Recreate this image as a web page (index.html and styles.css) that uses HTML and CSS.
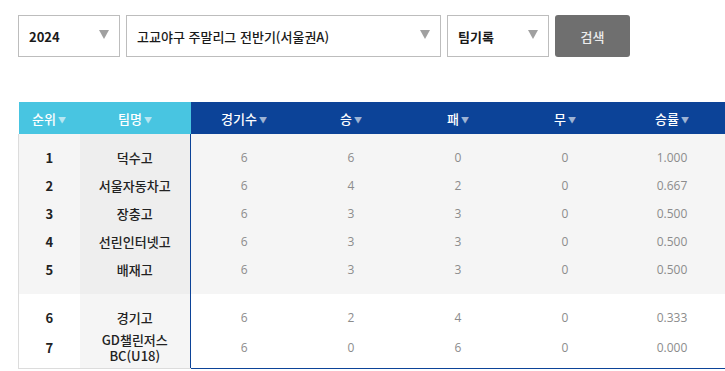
FILE: index.html
```html
<!DOCTYPE html>
<html lang="ko">
<head>
<meta charset="utf-8">
<link rel="stylesheet" href="styles.css">
</head>
<body>
<div class="page">
  <div class="controls">
    <div class="select sel-year"><span class="sel-text bold">2024</span><span class="caret"></span></div>
    <div class="select sel-league"><span class="sel-text">고교야구 주말리그 전반기(서울권A)</span><span class="caret"></span></div>
    <div class="select sel-type"><span class="sel-text bold">팀기록</span><span class="caret"></span></div>
    <button class="btn">검색</button>
  </div>
  <table class="rank-table">
    <colgroup>
      <col class="c-rank"><col class="c-team"><col class="c-stat"><col class="c-stat"><col class="c-stat"><col class="c-stat"><col class="c-stat">
    </colgroup>
    <thead>
      <tr>
        <th class="h-light">순위<span class="arr">▼</span></th>
        <th class="h-light">팀명<span class="arr">▼</span></th>
        <th class="h-dark">경기수<span class="arr">▼</span></th>
        <th class="h-dark">승<span class="arr">▼</span></th>
        <th class="h-dark">패<span class="arr">▼</span></th>
        <th class="h-dark">무<span class="arr">▼</span></th>
        <th class="h-dark">승률<span class="arr">▼</span></th>
      </tr>
    </thead>
    <tbody class="grp grp-a">
      <tr class="spacer"><td class="rank"></td><td class="team"></td><td class="stat first" colspan="5"></td></tr>
      <tr><td class="rank">1</td><td class="team">덕수고</td><td class="stat first">6</td><td class="stat">6</td><td class="stat">0</td><td class="stat">0</td><td class="stat">1.000</td></tr>
      <tr><td class="rank">2</td><td class="team">서울자동차고</td><td class="stat first">6</td><td class="stat">4</td><td class="stat">2</td><td class="stat">0</td><td class="stat">0.667</td></tr>
      <tr><td class="rank">3</td><td class="team">장충고</td><td class="stat first">6</td><td class="stat">3</td><td class="stat">3</td><td class="stat">0</td><td class="stat">0.500</td></tr>
      <tr><td class="rank">4</td><td class="team">선린인터넷고</td><td class="stat first">6</td><td class="stat">3</td><td class="stat">3</td><td class="stat">0</td><td class="stat">0.500</td></tr>
      <tr><td class="rank">5</td><td class="team">배재고</td><td class="stat first">6</td><td class="stat">3</td><td class="stat">3</td><td class="stat">0</td><td class="stat">0.500</td></tr>
      <tr class="spacer"><td class="rank"></td><td class="team"></td><td class="stat first" colspan="5"></td></tr>
    </tbody>
    <tbody class="grp grp-b">
      <tr class="spacer"><td class="rank"></td><td class="team"></td><td class="stat first" colspan="5"></td></tr>
      <tr><td class="rank">6</td><td class="team">경기고</td><td class="stat first">6</td><td class="stat">2</td><td class="stat">4</td><td class="stat">0</td><td class="stat">0.333</td></tr>
      <tr class="tall"><td class="rank">7</td><td class="team"><span class="ln">GD챌린저스</span><span class="ln">BC(U18)</span></td><td class="stat first">6</td><td class="stat">0</td><td class="stat">6</td><td class="stat">0</td><td class="stat">0.000</td></tr>
      <tr class="spacer end"><td class="rank"></td><td class="team"></td><td class="stat first" colspan="5"></td></tr>
    </tbody>
  </table>
</div>
</body>
</html>
```
FILE: styles.css
```css
html, body {
  margin: 0;
  padding: 0;
  background: #fff;
}
body {
  font-family: "Noto Sans CJK KR", "Noto Sans", sans-serif;
  font-size: 13px;
  color: #222;
}
.page {
  padding: 15px 0 0 18px;
}
.controls {
  display: flex;
  gap: 6px;
  height: 42px;
}
.select {
  box-sizing: border-box;
  height: 42px;
  border: 1px solid #bdbdbd;
  background: #fff;
  display: flex;
  align-items: center;
  justify-content: space-between;
  padding: 0 10px 0 10px;
}
.sel-year { width: 102px; }
.sel-league { width: 315px; }
.sel-type { width: 102px; }
.sel-text {
  font-size: 13px;
  color: #1a1a1a;
  line-height: 1;
  padding-top: 1px;
}
.sel-text.bold { font-weight: 700; }
.sel-league .sel-text { font-weight: 500; }
.caret {
  width: 0;
  height: 0;
  border-left: 5px solid transparent;
  border-right: 5px solid transparent;
  border-top: 9px solid #a0a0a0;
  margin-top: -4px;
}
.btn {
  box-sizing: border-box;
  width: 75px;
  height: 42px;
  border: none;
  border-radius: 3px;
  background: #6f6f6f;
  color: #ececec;
  font-family: "Noto Sans CJK KR", sans-serif;
  font-size: 13px;
  font-weight: 500;
  padding: 0;
}
.rank-table {
  margin-top: 45px;
  border-collapse: collapse;
  table-layout: fixed;
  width: 707px;
}
.c-rank { width: 61px; }
.c-team { width: 111px; }
.c-stat { width: 107px; }
th {
  height: 32px;
  padding: 0;
  color: #fff;
  font-weight: 500;
  font-size: 13px;
  text-align: center;
  vertical-align: middle;
}
.h-light { background: #48c5e1; }
.h-dark { background: #0c4398; }
.arr {
  font-size: 8px;
  margin-left: 2px;
  opacity: 0.6;
  position: relative;
  top: -1px;
}
td {
  padding: 0;
  height: 28px;
  text-align: center;
  vertical-align: middle;
  line-height: 16px;
}
.rank {
  font-weight: 700;
  color: #222;
  border-left: 1px solid #dcdcdc;
}
.team {
  font-weight: 500;
  color: #222;
}
.ln {
  display: block;
  height: 16px;
  line-height: 16px;
}
.stat {
  font-family: "Open Sans", "Noto Sans", sans-serif;
  font-size: 12px;
  color: #8c8c8c;
}
.stat.first {
  border-left: 1px solid #0c4398;
}
.spacer td { height: 10px; }
.spacer.end td { height: 4px; }
.tall td { height: 32px; }
.grp-a .rank, .grp-a .stat { background: #f5f5f5; }
.grp-a .team { background: #eeeeee; }
.grp-b .rank, .grp-b .stat { background: #fff; }
.grp-b .team { background: #f5f5f5; }
.end .rank, .end .team { border-bottom: 1px solid #dcdcdc; }
.end .stat { border-bottom: 1px solid #0c4398; }
```
